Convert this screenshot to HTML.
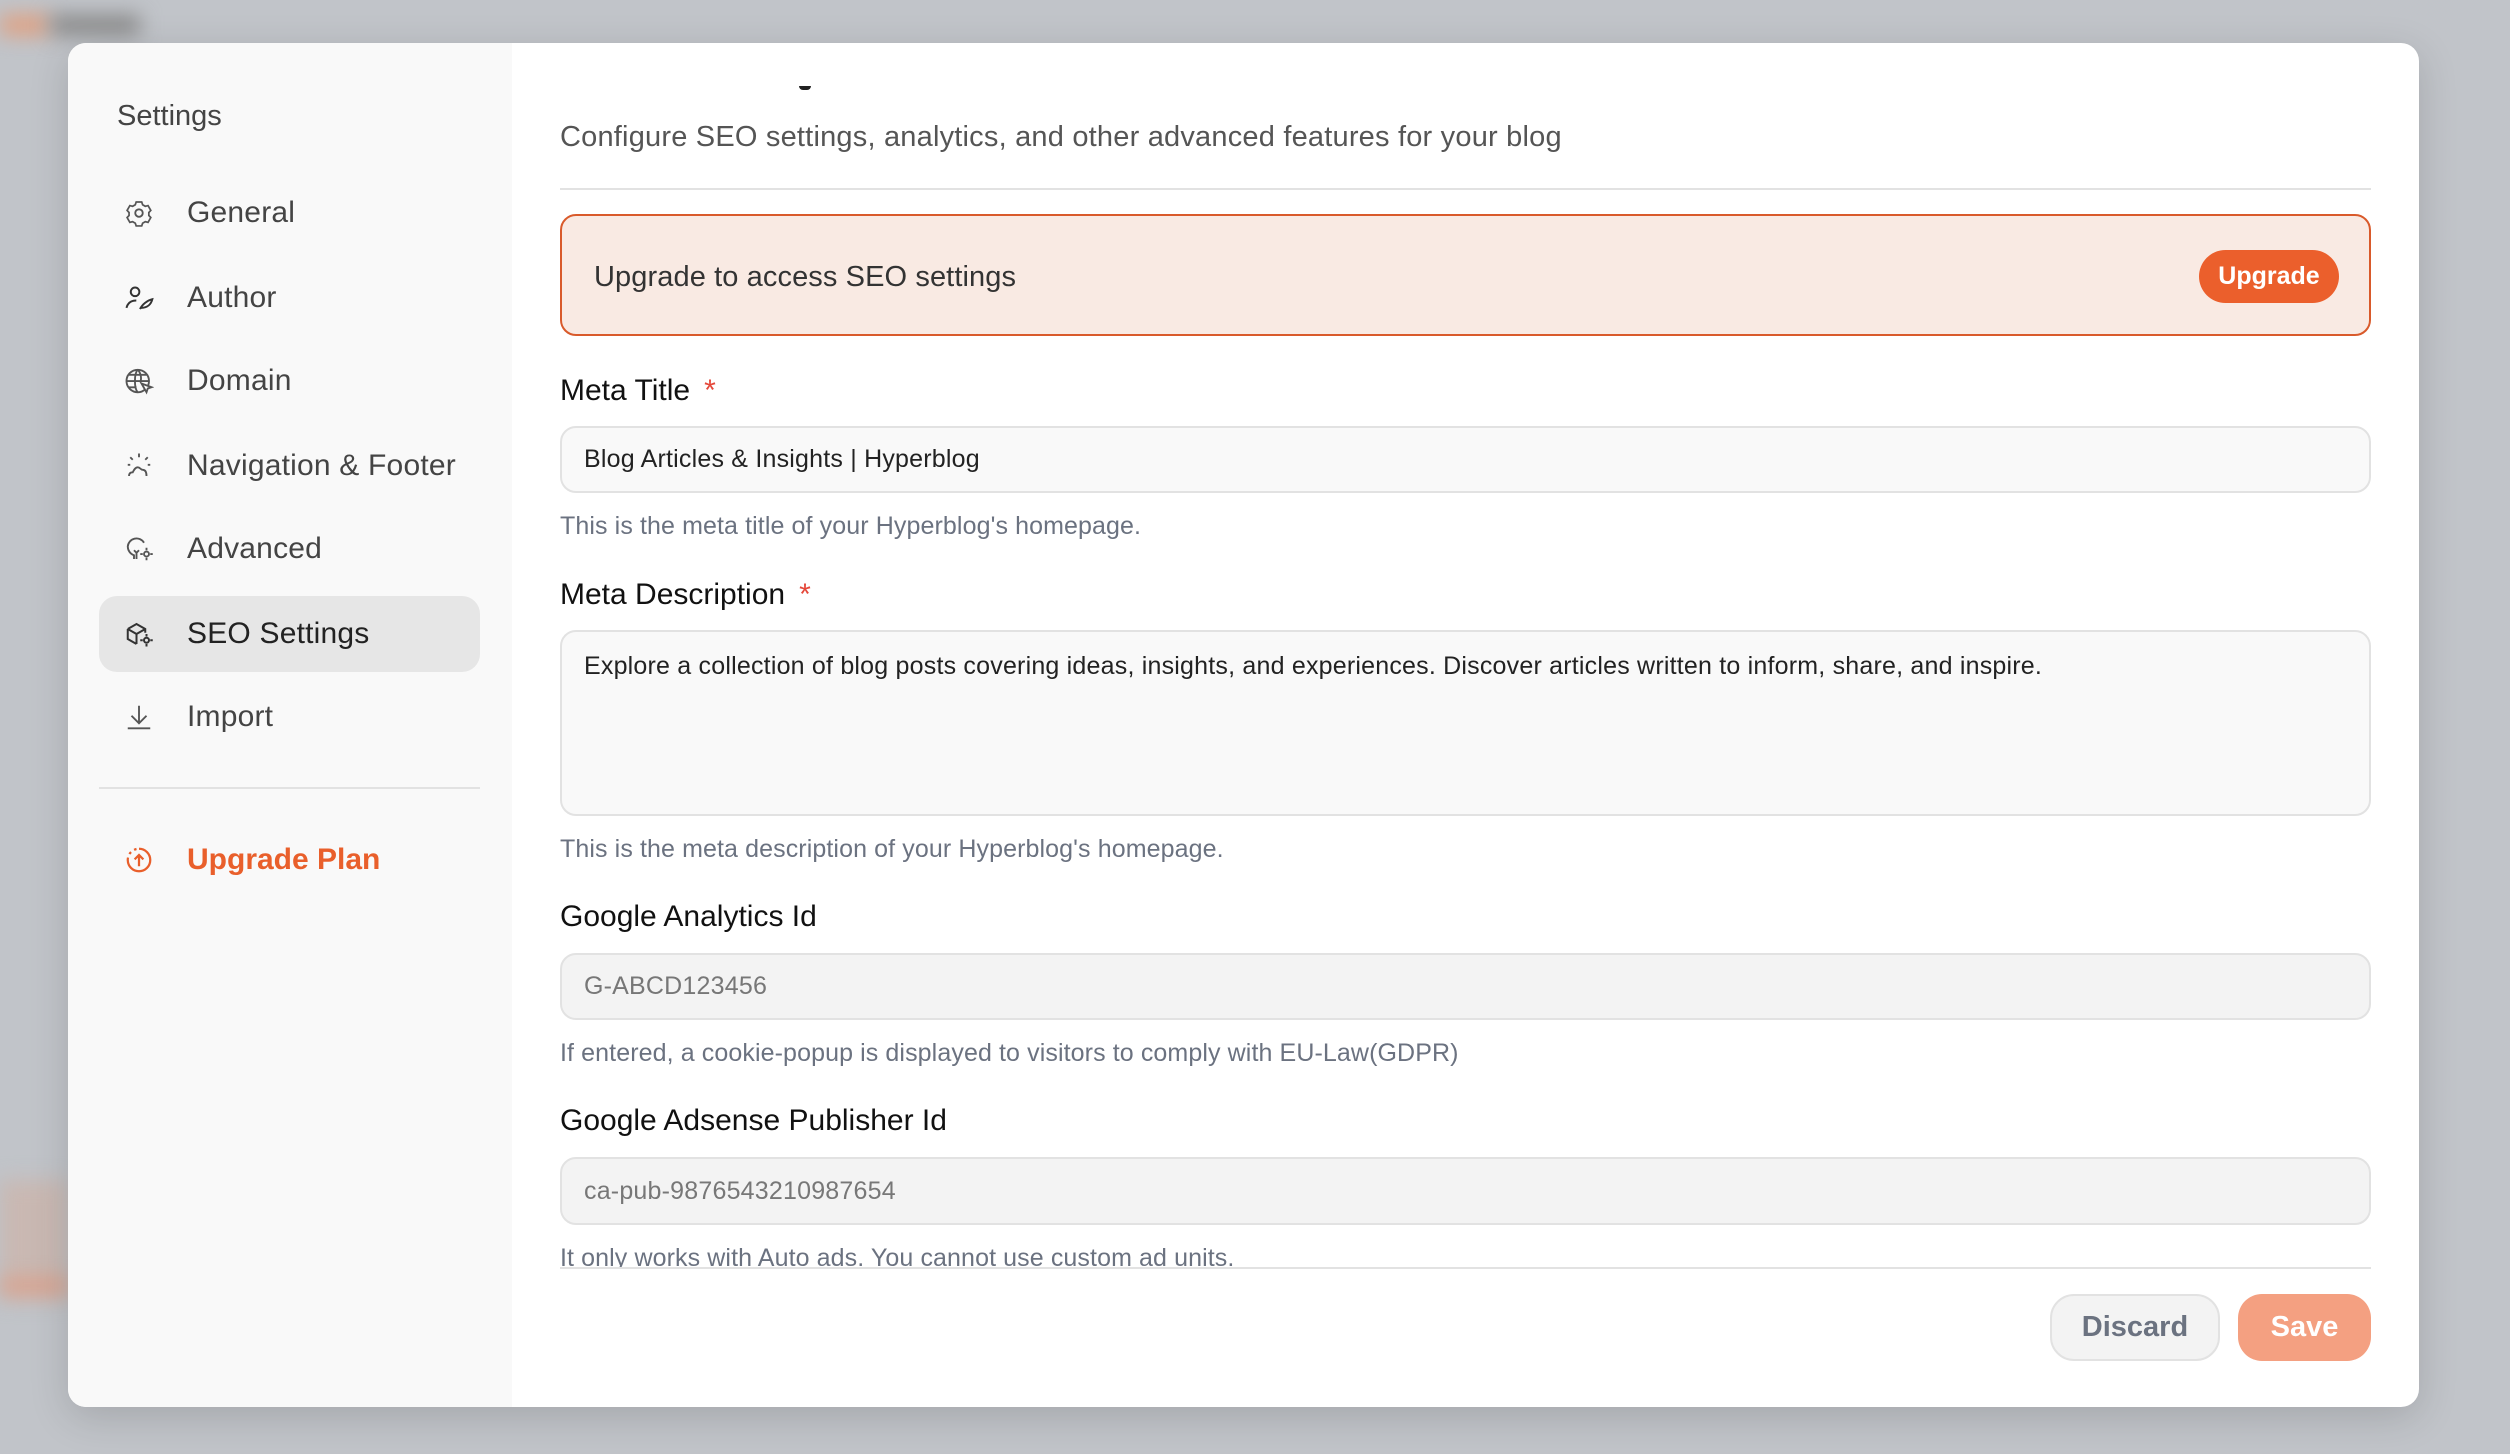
<!DOCTYPE html>
<html><head><meta charset="utf-8"><style>
*{box-sizing:border-box;margin:0;padding:0}
body{width:2510px;height:1454px;overflow:hidden;background:#c1c4c9;font-family:"Liberation Sans",sans-serif;position:relative}
.blur{position:absolute;filter:blur(10px)}
.modal{position:absolute;left:68px;top:43px;width:2351px;height:1364px;background:#fff;border-radius:18px;overflow:hidden;box-shadow:0 10px 40px rgba(0,0,0,.15)}
.side{position:absolute;left:0;top:0;width:444px;height:100%;background:#f9f9f9}
.side .h{position:absolute;left:49px;top:57px;font-size:29px;color:#444;letter-spacing:0}
.nav{position:absolute;left:31px;width:381px;height:76px;border-radius:18px;display:flex;align-items:center;font-size:30px;color:#444;letter-spacing:.2px}
.nav svg{position:absolute;left:25px;top:50%;transform:translateY(-50%)}
.nav span{position:absolute;left:88px}
.nav.act{background:#e6e6e6;color:#222}
.main{position:absolute;left:492px;top:0;width:1811px;height:100%}
.t{position:absolute;left:0;white-space:nowrap}
.sub{top:78px;font-size:29px;color:#555;letter-spacing:.2px}
.hr{position:absolute;left:0;width:1811px;height:2px;background:#e2e2e2}
.ban{position:absolute;left:0;top:171px;width:1811px;height:122px;border:2px solid #d95a2b;background:#f9eae3;border-radius:16px}
.ban .bt{position:absolute;left:32px;top:45px;font-size:29px;color:#333;letter-spacing:.1px}
.lab{font-size:30px;color:#111;letter-spacing:0}
.lab b{color:#e5483a;font-weight:normal;margin-left:14px}
.inp{position:absolute;left:0;width:1811px;border:2px solid #e2e2e2;border-radius:16px;background:#f9f9f9;font-size:25px;color:#222;padding-left:22px;letter-spacing:.2px}
.hlp{font-size:25px;color:#6b7280;letter-spacing:.1px}
.btn{position:absolute;top:1251px;height:67px;border-radius:24px;font-size:29px;display:flex;align-items:center;justify-content:center;font-weight:bold}
</style></head><body>
<div class="blur" style="left:0;top:15px;width:50px;height:20px;background:#e0a080"></div>
<div class="blur" style="left:50px;top:15px;width:90px;height:20px;background:#888"></div>
<div class="blur" style="left:0;top:1180px;width:68px;height:120px;background:#c9b8b2"></div>
<div class="blur" style="left:0;top:1280px;width:68px;height:12px;background:#e09a80"></div>
<div class="modal">
 <div class="side">
  <div class="h">Settings</div>
  <div class="nav" style="top:132px"><svg width="30" height="30" viewBox="0 0 24 24" fill="none" stroke="#555" stroke-width="1.5"><path d="M9.6 3.5h4.8l.8 2.4 2.3 1.3 2.4-.6 2.4 4.2-1.7 1.8v2.6l1.7 1.8-2.4 4.2-2.4-.6-2.3 1.3-.8 2.4H9.6l-.8-2.4-2.3-1.3-2.4.6-2.4-4.2 1.7-1.8v-2.6L1.7 10.8 4.1 6.6l2.4.6 2.3-1.3z" transform="scale(.92) translate(1 0)"/><circle cx="12" cy="12" r="3"/></svg><span>General</span></div>
  <div class="nav" style="top:217px"><svg width="32" height="30" viewBox="0 0 26 24" fill="none" stroke="#333" stroke-width="1.6"><circle cx="9" cy="7" r="3.5"/><path d="M2 20c1-4 4-6 8-6"/><path d="M13 21c2-4 6-7 10-8-1 4-4 7-9 7"/></svg><span>Author</span></div>
  <div class="nav" style="top:300px"><svg width="30" height="30" viewBox="0 0 24 24" fill="none" stroke="#555" stroke-width="1.5"><circle cx="11" cy="12" r="9"/><path d="M2 12h18M11 3c-3 3-3 15 0 18M11 3c3 3 3 8 2 10M4 7h14M4 17h6"/><path d="M14 14l8 3-3 1-1 3z" fill="#fff"/></svg><span>Domain</span></div>
  <div class="nav" style="top:385px"><svg width="30" height="30" viewBox="0 0 24 24" fill="none" stroke="#555" stroke-width="1.5"><path d="M12 2v3M5 5l2 2M19 5l-2 2M3 11h2M19 11h2M4 20c0-2 1-3 3-3 1-2 2-4 4-4s2 2 4 2 3 2 3 5"/></svg><span>Navigation &amp; Footer</span></div>
  <div class="nav" style="top:468px"><svg width="30" height="30" viewBox="0 0 24 24" fill="none" stroke="#555" stroke-width="1.5"><path d="M8 20v-3C5 16 3 13 3 10a7 7 0 0 1 13-3"/><path d="M8 13l2 2 2-2M10 15v5"/><circle cx="18" cy="16" r="2"/><path d="M18 11v2M18 19v2M13 16h2M21 16h2"/></svg><span>Advanced</span></div>
  <div class="nav act" style="top:553px"><svg width="30" height="30" viewBox="0 0 24 24" fill="none" stroke="#333" stroke-width="1.6"><path d="M3 8l7-4 7 4v3M3 8v8l7 4M3 8l7 4v8M10 12l7-4"/><circle cx="18" cy="17" r="2"/><path d="M18 12v2M18 20v2M13 17h2M21 17h2"/></svg><span>SEO Settings</span></div>
  <div class="nav" style="top:636px"><svg width="30" height="30" viewBox="0 0 24 24" fill="none" stroke="#555" stroke-width="1.5"><path d="M12 3v14M6 11l6 6 6-6M3 21h18"/></svg><span>Import</span></div>
  <div style="position:absolute;left:31px;top:744px;width:381px;height:2px;background:#e2e2e2"></div>
  <div class="nav" style="top:779px;color:#e95f2b;font-weight:bold;letter-spacing:0"><svg width="30" height="30" viewBox="0 0 24 24" fill="none" stroke="#e95f2b" stroke-width="1.8"><path d="M12 3a9 9 0 1 1-9 9" /><path d="M3 12a9 9 0 0 1 9-9" stroke-dasharray="2 3"/><path d="M12 17V8M8.5 11.5 12 8l3.5 3.5"/></svg><span>Upgrade Plan</span></div>
 </div>
 <div class="main">
  <div style="position:absolute;left:239px;top:43px;width:12px;height:4px;border-radius:0 0 6px 6px;background:#222"></div>
  <div class="t sub">Configure SEO settings, analytics, and other advanced features for your blog</div>
  <div class="hr" style="top:145px"></div>
  <div class="ban"><div class="bt">Upgrade to access SEO settings</div>
   <div style="position:absolute;right:30px;top:34px;width:140px;height:53px;border-radius:27px;background:#eb5f2c;color:#fff;font-weight:bold;font-size:25px;display:flex;align-items:center;justify-content:center">Upgrade</div></div>
  <div class="t lab" style="top:331px">Meta Title<b>*</b></div>
  <div class="inp" style="top:383px;height:67px;line-height:63px">Blog Articles &amp; Insights | Hyperblog</div>
  <div class="t hlp" style="top:469px">This is the meta title of your Hyperblog's homepage.</div>
  <div class="t lab" style="top:535px">Meta Description<b>*</b></div>
  <div class="inp" style="top:587px;height:186px;padding-top:20px">Explore a collection of blog posts covering ideas, insights, and experiences. Discover articles written to inform, share, and inspire.</div>
  <div class="t hlp" style="top:792px">This is the meta description of your Hyperblog's homepage.</div>
  <div class="t lab" style="top:857px">Google Analytics Id</div>
  <div class="inp" style="top:910px;height:67px;line-height:63px;background:#f3f3f3;color:#777">G-ABCD123456</div>
  <div class="t hlp" style="top:996px">If entered, a cookie-popup is displayed to visitors to comply with EU-Law(GDPR)</div>
  <div class="t lab" style="top:1061px">Google Adsense Publisher Id</div>
  <div class="inp" style="top:1114px;height:68px;line-height:64px;background:#f3f3f3;color:#777">ca-pub-9876543210987654</div>
  <div style="position:absolute;left:0;top:1182px;width:1811px;height:43px;overflow:hidden"><div class="t hlp" style="top:19px">It only works with Auto ads. You cannot use custom ad units.</div></div>
  <div class="hr" style="top:1224px"></div>
  <div class="btn" style="left:1490px;width:170px;background:#f3f3f3;border:2px solid #e2e2e2;color:#6b7280">Discard</div>
  <div class="btn" style="left:1678px;width:133px;background:#f4a081;color:#fff">Save</div>
 </div>
</div>
</body></html>
